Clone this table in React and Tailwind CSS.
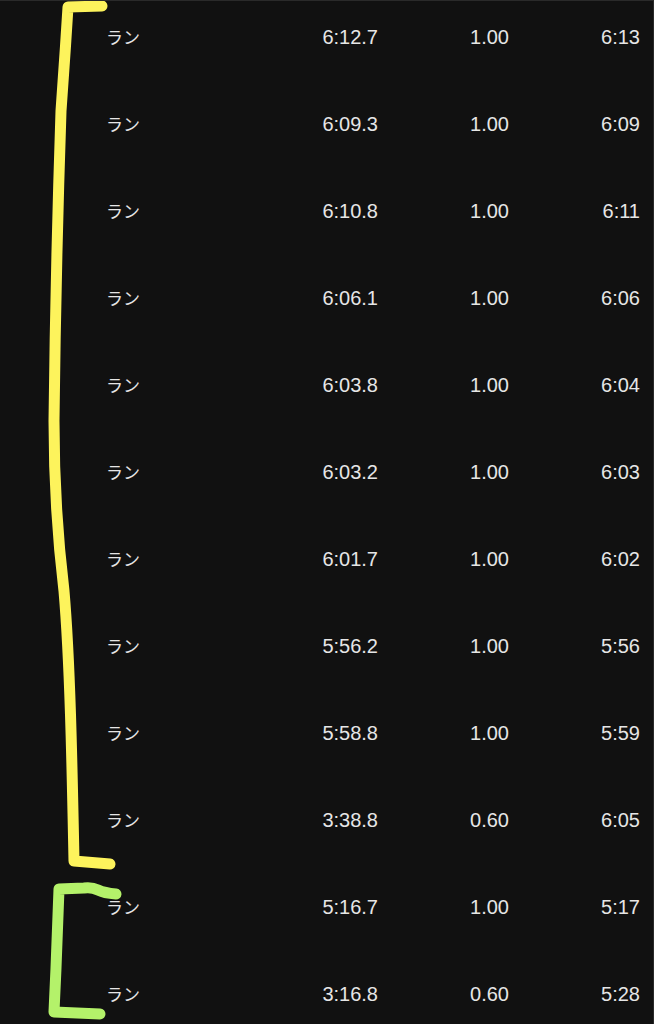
import React from "react";

const laps = [
  { time: "6:12.7", dist: "1.00", pace: "6:13" },
  { time: "6:09.3", dist: "1.00", pace: "6:09" },
  { time: "6:10.8", dist: "1.00", pace: "6:11" },
  { time: "6:06.1", dist: "1.00", pace: "6:06" },
  { time: "6:03.8", dist: "1.00", pace: "6:04" },
  { time: "6:03.2", dist: "1.00", pace: "6:03" },
  { time: "6:01.7", dist: "1.00", pace: "6:02" },
  { time: "5:56.2", dist: "1.00", pace: "5:56" },
  { time: "5:58.8", dist: "1.00", pace: "5:59" },
  { time: "3:38.8", dist: "0.60", pace: "6:05" },
  { time: "5:16.7", dist: "1.00", pace: "5:17" },
  { time: "3:16.8", dist: "0.60", pace: "5:28" },
];

// hand-drawn brackets marking the lap groups
const Brackets = () => (
  <svg
    className="absolute inset-0 pointer-events-none"
    width="654"
    height="1024"
    viewBox="0 0 654 1024"
    fill="none"
    strokeLinecap="round"
    strokeLinejoin="round"
  >
    <path
      d="M102 5 L68 6 C66 40 63 80 61 110 C58 200 55 330 54 420 C54 480 58 540 64 590 C70 660 72 760 74 860 L110 863"
      stroke="#fdf35c"
      strokeWidth="11"
    />
    <path
      d="M116 893 Q104 892 98 889 Q92 886 84 887 L59 888 C58 920 56 970 54 1011 L100 1013"
      stroke="#b4f26a"
      strokeWidth="11"
    />
  </svg>
);

export default function App() {
  return (
    <div className="relative w-[654px] h-[1024px] overflow-hidden bg-[#111111] border-t border-r border-[#2a2a2a] text-[#e6e6e6]">
      <div className="-mt-[8px] flex flex-col">
        {laps.map((lap, i) => (
          <div key={i} className="flex items-center h-[87px] pl-[106px]">
            <span
              className="w-[60px] text-[17px] leading-none"
              style={{ fontFamily: '"Noto Sans CJK JP", "Noto Sans", sans-serif' }}
            >
              ラン
            </span>
            <span className="w-[212px] text-right text-[20px] leading-none font-['Liberation_Sans',Arial,sans-serif]">
              {lap.time}
            </span>
            <span className="w-[131px] text-right text-[20px] leading-none font-['Liberation_Sans',Arial,sans-serif]">
              {lap.dist}
            </span>
            <span className="w-[131px] text-right text-[20px] leading-none font-['Liberation_Sans',Arial,sans-serif]">
              {lap.pace}
            </span>
          </div>
        ))}
      </div>
      <Brackets />
    </div>
  );
}
